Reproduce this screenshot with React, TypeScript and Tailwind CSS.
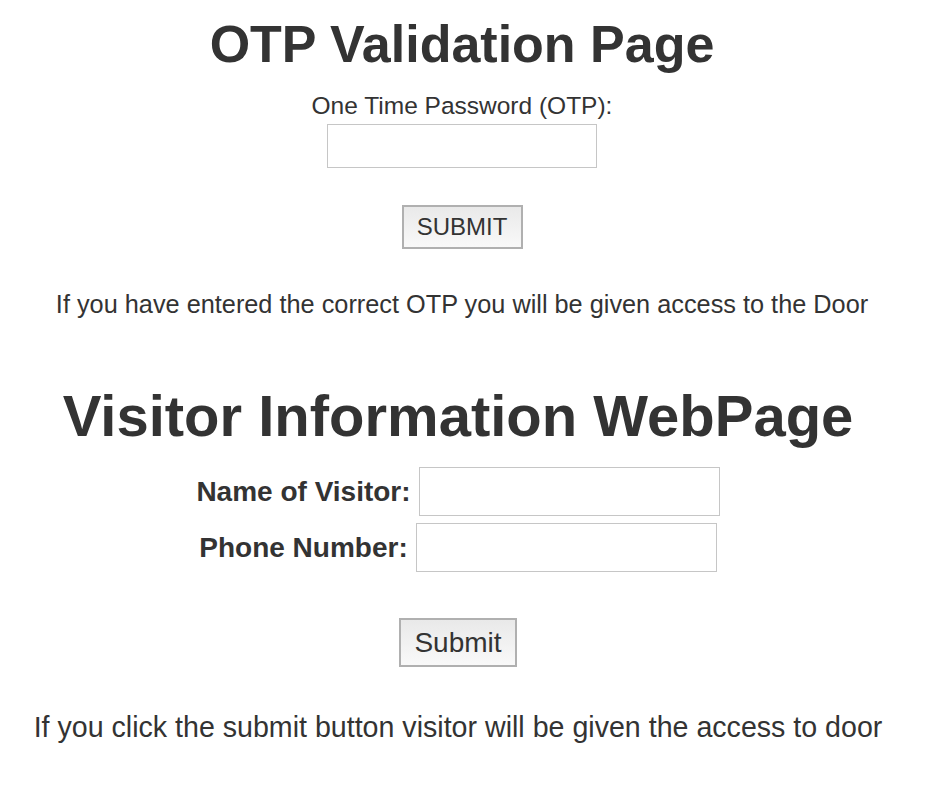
import React from "react";

export default function App() {
  return (
    <div
      className="min-h-[800px] bg-white text-[#333333] text-center"
      style={{ fontFamily: '"Liberation Sans", Arial, Helvetica, sans-serif' }}
    >
      <div className="pr-[8px]">
        <h1 className="pt-[14px] text-[52px] leading-[60px] font-bold">OTP Validation Page</h1>
        <div className="mt-[18px] text-[24.5px] leading-[28px]">One Time Password (OTP):</div>
        <div className="mt-[4px] flex justify-center">
          <input type="text" className="w-[270px] h-[44px] border border-[#c6c6c6] bg-white outline-none" />
        </div>
        <div className="mt-[37px] flex justify-center">
          <button className="w-[121px] h-[44px] border-2 border-[#b0b0b0] bg-gradient-to-b from-[#e9e9e9] to-[#f9f9f9] text-[24px] leading-[28px] text-[#333333]">
            SUBMIT
          </button>
        </div>
        <p className="mt-[40px] text-[25.3px] leading-[30px]">
          If you have entered the correct OTP you will be given access to the Door
        </p>
      </div>
      <div className="pr-[16px]">
        <h2 className="mt-[64px] text-[58px] leading-[66px] font-bold">Visitor Information WebPage</h2>
        <div className="mt-[18px] flex flex-col items-center gap-[7px]">
          <div className="flex items-center justify-center gap-[8px]">
            <label className="text-[28px] leading-[32px] font-bold">Name of Visitor:</label>
            <input type="text" className="w-[301px] h-[49px] border border-[#c6c6c6] bg-white outline-none" />
          </div>
          <div className="flex items-center justify-center gap-[8px]">
            <label className="text-[28px] leading-[32px] font-bold">Phone Number:</label>
            <input type="text" className="w-[301px] h-[49px] border border-[#c6c6c6] bg-white outline-none" />
          </div>
        </div>
        <div className="mt-[46px] flex justify-center">
          <button className="w-[118px] h-[49px] border-2 border-[#b0b0b0] bg-gradient-to-b from-[#e9e9e9] to-[#f9f9f9] text-[28px] leading-[32px] text-[#333333]">
            Submit
          </button>
        </div>
        <p className="mt-[43px] text-[28.6px] leading-[34px]">
          If you click the submit button visitor will be given the access to door
        </p>
      </div>
    </div>
  );
}
